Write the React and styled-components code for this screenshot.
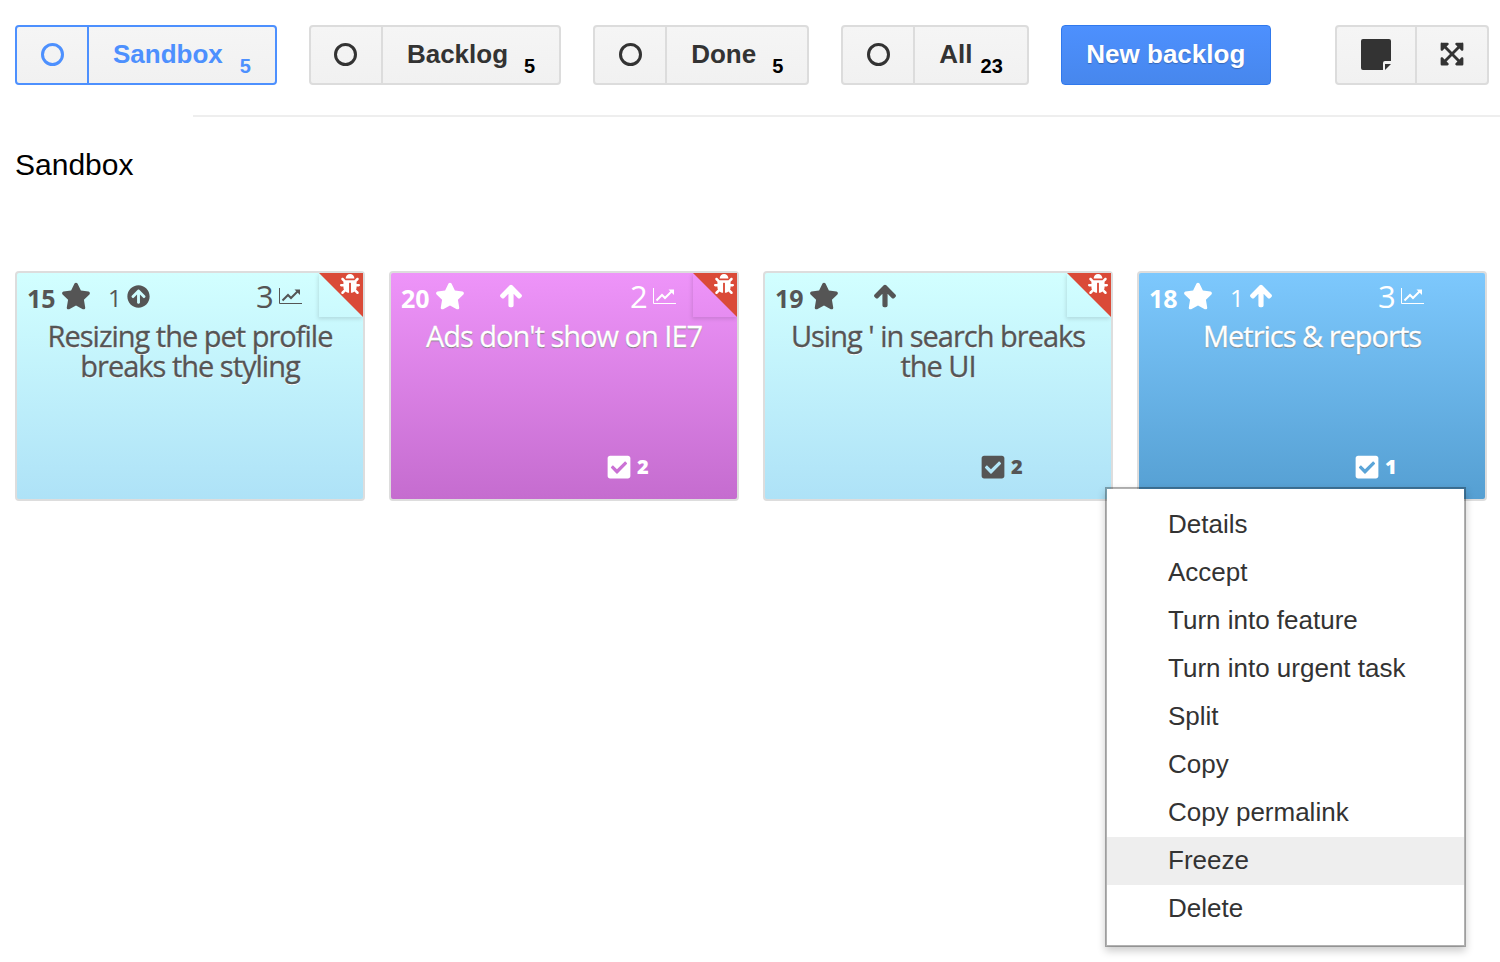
import React from 'react';
import styled, { createGlobalStyle } from 'styled-components';
import { FaStar, FaArrowUp, FaArrowCircleUp, FaCheckSquare, FaBug, FaExpandArrowsAlt } from 'react-icons/fa';

const GlobalStyle = createGlobalStyle`
    html, body{
        margin: 0;
        background: #fff;
    }
    body{
        font-family: "Liberation Sans", Arial, sans-serif;
        color: #333;
    }
`;

const Page = styled.div`
    position: relative;
    width: 1500px;
    height: 962px;
    overflow: hidden;
`;

const Toolbar = styled.div`
    display: flex;
    gap: 32px;
    padding: 25px 11px 0 15px;
`;

const ButtonGroup = styled.div`
    display: flex;
    height: 60px;
    box-sizing: border-box;
    border: 2px solid ${props => props.$active ? '#4d90fe' : '#dcdcdc'};
    border-radius: 4px;
    background-image: linear-gradient(#f5f5f5, #f1f1f1);
    color: ${props => props.$active ? '#4d90fe' : '#333'};
    margin-left: ${props => props.$push ? '32px' : '0'};
`;

const IconCell = styled.div`
    display: flex;
    align-items: center;
    justify-content: center;
    width: ${props => props.$width}px;
    box-sizing: border-box;
    padding-bottom: 2px;
    font-size: 26px;
    color: #333;
    & + & {
        border-left: 2px solid #dcdcdc;
    }
`;

const Radio = styled.span`
    display: block;
    width: 23px;
    height: 23px;
    box-sizing: border-box;
    border-radius: 50%;
    border: 3px solid ${props => props.$active ? '#4d90fe' : '#333'};
`;

const LabelCell = styled.div`
    display: flex;
    align-items: center;
    padding: 0 24px 2px 24px;
    border-left: 2px solid ${props => props.$active ? '#4d90fe' : '#dcdcdc'};
    font-size: 26px;
    font-weight: 700;
`;

const Count = styled.span`
    align-self: flex-end;
    margin: 0 0 3px ${props => props.$gap}px;
    font-size: 20px;
    line-height: 24px;
    color: ${props => props.$active ? '#4d90fe' : '#000'};
`;

const PrimaryButton = styled.div`
    display: flex;
    align-items: center;
    justify-content: center;
    width: 210px;
    height: 60px;
    box-sizing: border-box;
    padding-bottom: 2px;
    border: 1px solid #3079ed;
    border-radius: 4px;
    background-image: linear-gradient(#4d90fe, #4787ed);
    color: #fff;
    font-size: 26px;
    font-weight: 700;
    text-shadow: 0 1px 1px rgba(0, 0, 0, .25);
`;

const Rule = styled.div`
    height: 2px;
    margin: 30px 0 0 193px;
    background: #eeeeee;
`;

const Heading = styled.h2`
    margin: 30px 0 0 15px;
    font-size: 30px;
    line-height: 36px;
    font-weight: 400;
    color: #000;
`;

const Cards = styled.div`
    display: flex;
    gap: 24px;
    padding: 88px 0 0 15px;
`;

const palette = {
    light: { from: '#d2ffff', to: '#aee2f7', text: '#555', shadow: '0 1px 0 #fff' },
    pink: { from: '#ee94f9', to: '#c56ccf', text: '#fff', shadow: '0 1px 1px #777' },
    blue: { from: '#7dc8fd', to: '#559fd2', text: '#fff', shadow: '0 1px 1px #777' },
};

const Card = styled.div`
    position: relative;
    display: flex;
    flex-direction: column;
    width: 350px;
    height: 230px;
    box-sizing: border-box;
    padding: 0 0 19px;
    border: 2px solid #dddddd;
    border-radius: 4px;
    background-image: linear-gradient(${props => palette[props.$tone].from}, ${props => palette[props.$tone].to});
    color: ${props => palette[props.$tone].text};
    font-family: "Open Sans", sans-serif;
`;

const Stats = styled.div`
    display: grid;
    grid-template-columns: 81px 148px auto;
    height: 46px;
    padding: 0 0 0 10px;
    align-items: center;
`;

const Stat = styled.div`
    display: flex;
    align-items: center;
    gap: ${props => props.$gap || 0}px;
`;

const Points = styled.span`
    font-size: 25px;
    font-weight: 700;
    margin-top: 3px;
`;

const Progress = styled.span`
    font-size: 24px;
    min-width: 19px;
    letter-spacing: -1px;
    margin-top: 2px;
    &:empty{
        min-width: 17px;
    }
`;

const Velocity = styled.span`
    font-size: 31px;
    line-height: 36px;
`;

const Title = styled.div`
    padding: 2px 12px 0;
    font-size: 29px;
    line-height: 30px;
    letter-spacing: -1px;
    -webkit-text-stroke: .3px currentColor;
    text-align: center;
    text-shadow: ${props => palette[props.$tone].shadow};
`;

const Tasks = styled.div`
    display: flex;
    align-items: center;
    gap: 5px;
    margin-top: auto;
    padding-left: 215px;
    font-size: 20px;
    line-height: 24px;
    font-weight: 800;
`;

const Fold = styled.div`
    position: absolute;
    top: 0;
    right: 0;
    width: 44px;
    height: 44px;
    box-shadow: -1px 2px 4px rgba(0, 0, 0, .12);
    clip-path: inset(0 0 -6px -6px);
`;

const Ribbon = styled.div`
    position: absolute;
    inset: 0;
    background: #da4a38;
    clip-path: polygon(0 0, 100% 0, 100% 100%);
`;

const BugIcon = styled(FaBug)`
    position: absolute;
    top: 1px;
    right: 3px;
    font-size: 20px;
    color: #fff;
`;

const BoldArrow = styled(FaArrowUp)`
    stroke: currentColor;
    stroke-width: 30px;
`;

const Menu = styled.div`
    position: absolute;
    left: 1105px;
    top: 487px;
    width: 361px;
    box-sizing: border-box;
    padding: 12px 0;
    border: 2px solid rgba(0, 0, 0, .3);
    background: #fff;
    background-clip: padding-box;
    box-shadow: 0 4px 8px rgba(0, 0, 0, .2);
`;

const MenuItem = styled.div`
    height: 48px;
    padding-left: 61px;
    font-size: 26px;
    line-height: 46px;
    color: #333;
    background: ${props => props.$hover ? '#eeeeee' : 'transparent'};
`;

const ChartIcon = () => (
    <svg width="23" height="16" viewBox="0 0 23 16" fill="none" stroke="currentColor">
        <path d="M.5 0v15.5H23" strokeWidth="1" />
        <path d="M3.5 12.5 9 7l3 3 7-7" strokeWidth="2" />
        <path d="M15.5 1.5H21v5.5z" fill="currentColor" stroke="none" />
    </svg>
);

const NoteIcon = () => (
    <svg width="30" height="31" viewBox="0 0 30 31" style={{ display: 'block' }}>
        <path fill="#333" d="M2 0h26a2 2 0 0 1 2 2v20h-6a2 2 0 0 0-2 2v7H2a2 2 0 0 1-2-2V2a2 2 0 0 1 2-2z" />
        <path fill="#333" d="M30 25 24 31v-6z" />
    </svg>
);

const tabs = [
    { label: 'Sandbox', count: 5, gap: 17, active: true },
    { label: 'Backlog', count: 5, gap: 16 },
    { label: 'Done', count: 5, gap: 16 },
    { label: 'All', count: 23, gap: 8 },
];

const stories = [
    { tone: 'light', points: 15, progress: 1, arrow: 'circle', velocity: 3, title: 'Resizing the pet profile breaks the styling', bug: true },
    { tone: 'pink', points: 20, arrow: 'plain', velocity: 2, title: "Ads don't show on IE7", tasks: 2, bug: true },
    { tone: 'light', points: 19, arrow: 'plain', title: "Using ' in search breaks the UI", tasks: 2, bug: true },
    { tone: 'blue', points: 18, progress: 1, arrow: 'plain', velocity: 3, title: 'Metrics & reports', tasks: 1 },
];

const menuItems = ['Details', 'Accept', 'Turn into feature', 'Turn into urgent task', 'Split', 'Copy', 'Copy permalink', 'Freeze', 'Delete'];

export default function App() {
    return (
        <Page>
            <GlobalStyle />
            <Toolbar>
                {tabs.map(tab => (
                    <ButtonGroup key={tab.label} $active={tab.active}>
                        <IconCell $width={70}><Radio $active={tab.active} /></IconCell>
                        <LabelCell $active={tab.active}>
                            {tab.label}
                            <Count $gap={tab.gap} $active={tab.active}>{tab.count}</Count>
                        </LabelCell>
                    </ButtonGroup>
                ))}
                <PrimaryButton>New backlog</PrimaryButton>
                <ButtonGroup $push>
                    <IconCell $width={78}><NoteIcon /></IconCell>
                    <IconCell $width={72}><FaExpandArrowsAlt /></IconCell>
                </ButtonGroup>
            </Toolbar>
            <Rule />
            <Heading>Sandbox</Heading>
            <Cards>
                {stories.map(story => (
                    <Card key={story.title} $tone={story.tone}>
                        <Stats>
                            <Stat $gap={5}><Points>{story.points}</Points><FaStar size={30} /></Stat>
                            <Stat>
                                <Progress>{story.progress}</Progress>
                                {story.arrow === 'circle' ? <FaArrowCircleUp size={23} /> : <BoldArrow size={24} />}
                            </Stat>
                            {story.velocity && <Stat $gap={5}><Velocity>{story.velocity}</Velocity><ChartIcon /></Stat>}
                        </Stats>
                        <Title $tone={story.tone}>{story.title}</Title>
                        {story.tasks && <Tasks><FaCheckSquare size={26} />{story.tasks}</Tasks>}
                        {story.bug && <Fold><Ribbon /><BugIcon /></Fold>}
                    </Card>
                ))}
            </Cards>
            <Menu>
                {menuItems.map(item => <MenuItem key={item} $hover={item === 'Freeze'}>{item}</MenuItem>)}
            </Menu>
        </Page>
    );
}
